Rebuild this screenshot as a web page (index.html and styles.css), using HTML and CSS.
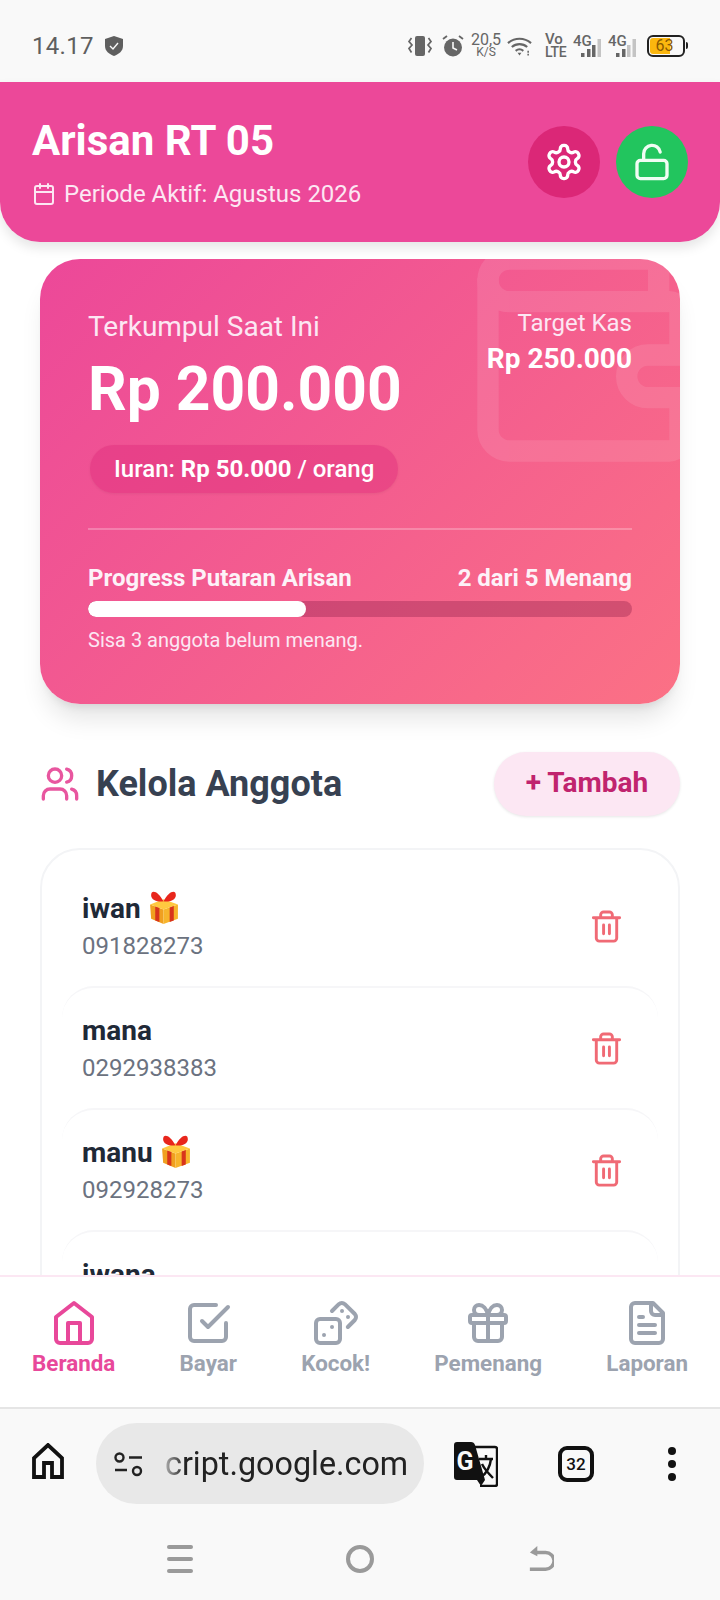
FILE: index.html
```html
<!DOCTYPE html>
<html lang="en">
<head>
    <meta charset="UTF-8">
    <meta name="viewport" content="width=device-width, initial-scale=1.0">
    <title>Arisan RT 05</title>
    <link rel="stylesheet" href="styles.css">
</head>
<body>
    <div class="phone">
        <!-- Android status bar -->
        <div class="status-bar">
            <div class="status-left">
                <span class="status-time">14.17</span>
                <svg class="shield" viewBox="0 0 18 20"><path d="M9 0l9 3v7c0 5-4 8-9 10-5-2-9-5-9-10V3z" fill="#5f5f5f"/><path d="M5 10l3 3 5-6" fill="none" stroke="#f9f9f9" stroke-width="1.4"/></svg>
            </div>
            <div class="status-right">
                <svg class="st-vibrate" viewBox="0 0 24 20"><rect x="7" y="0" width="10" height="20" rx="2" fill="#666"/><path d="M3.500 2L1 5.500l3 3.500-3 3.500 2.500 4M20.500 2L23 5.500 20 9l3 3.500-2.500 4" fill="none" stroke="#666" stroke-width="1.700"/></svg>
                <svg class="st-alarm" viewBox="0 0 22 22"><circle cx="11" cy="12.500" r="9" fill="#666"/><path d="M11 7v6l4 2" fill="none" stroke="#f9f9f9" stroke-width="1.600"/><path d="M1 4l4-3M21 4l-4-3" stroke="#666" stroke-width="1.800"/></svg>
                <div class="st-speed"><span class="st-speed-num">20,5</span><span class="st-speed-unit">K/S</span></div>
                <svg class="st-wifi" viewBox="0 0 26 20"><path d="M1 7c7-6 17-6 24 0M5 11c4.500-4 11.500-4 16 0M9 15c2.500-2 5.500-2 8 0" fill="none" stroke="#666" stroke-width="2.200"/><path d="M11 17h4l-2 3z" fill="#666"/><path d="M22 15v5" stroke="#666" stroke-width="1.600" stroke-dasharray="2 1"/></svg>
                <div class="st-volte"><span>Vo</span><span>LTE</span></div>
                <div class="st-signal">
                    <span class="st-4g">4G</span>
                    <svg class="st-bars" viewBox="0 0 22 18"><rect x="2" y="14" width="3.500" height="4" fill="#666"/><rect x="8" y="10" width="3.500" height="8" fill="#666"/><rect x="13" y="6" width="3.500" height="12" fill="#666"/><rect x="18.500" y="0" width="3.500" height="18" fill="#c4c4c4"/></svg>
                </div>
                <div class="st-signal">
                    <span class="st-4g">4G</span>
                    <svg class="st-bars" viewBox="0 0 22 18"><rect x="2" y="14" width="3.500" height="4" fill="#666"/><rect x="8" y="10" width="3.500" height="8" fill="#666"/><rect x="13" y="6" width="3.500" height="12" fill="#c4c4c4"/><rect x="18.500" y="0" width="3.500" height="18" fill="#c4c4c4"/></svg>
                </div>
                <div class="battery">
                    <div class="battery-body"><div class="battery-fill" style="width: 63%"></div><span class="battery-num">63</span></div>
                    <div class="battery-tip"></div>
                </div>
            </div>
        </div>

        <div class="app">
            <header class="app-header">
                <div class="app-heading">
                    <h1 class="app-title">Arisan RT 05</h1>
                    <div class="app-period">
                        <svg class="icon icon-calendar" viewBox="0 0 24 24"><path d="M8 2v4M16 2v4M3 10h18"/><rect x="3" y="4" width="18" height="18" rx="2"/></svg>
                        <span>Periode Aktif: Agustus 2026</span>
                    </div>
                </div>
                <div class="header-actions">
                    <div class="round-btn round-btn-settings">
                        <svg class="icon" viewBox="0 0 24 24"><path d="M12.220 2h-.44a2 2 0 0 0-2 2v.18a2 2 0 0 1-1 1.730l-.43.25a2 2 0 0 1-2 0l-.15-.08a2 2 0 0 0-2.730.73l-.22.38a2 2 0 0 0 .73 2.730l.15.1a2 2 0 0 1 1 1.720v.51a2 2 0 0 1-1 1.740l-.15.09a2 2 0 0 0-.73 2.730l.22.38a2 2 0 0 0 2.730.73l.15-.08a2 2 0 0 1 2 0l.43.25a2 2 0 0 1 1 1.730V20a2 2 0 0 0 2 2h.44a2 2 0 0 0 2-2v-.18a2 2 0 0 1 1-1.730l.43-.25a2 2 0 0 1 2 0l.15.08a2 2 0 0 0 2.730-.73l.22-.39a2 2 0 0 0-.73-2.730l-.15-.08a2 2 0 0 1-1-1.740v-.5a2 2 0 0 1 1-1.740l.15-.09a2 2 0 0 0 .73-2.730l-.22-.38a2 2 0 0 0-2.730-.73l-.15.08a2 2 0 0 1-2 0l-.43-.25a2 2 0 0 1-1-1.730V4a2 2 0 0 0-2-2z"/><circle cx="12" cy="12" r="3"/></svg>
                    </div>
                    <div class="round-btn round-btn-lock">
                        <svg class="icon" viewBox="0 0 24 24"><rect x="3" y="11" width="18" height="11" rx="2"/><path d="M7 11V7a5 5 0 0 1 9.900-1"/></svg>
                    </div>
                </div>
            </header>

            <main class="content">
                <section class="summary-card">
                    <svg class="summary-wallet" viewBox="0 0 24 24"><path d="M19 7V4a1 1 0 0 0-1-1H5a2 2 0 0 0 0 4h15a1 1 0 0 1 1 1v4h-3a2 2 0 0 0 0 4h3a1 1 0 0 0 1-1v-2a1 1 0 0 0-1-1"/><path d="M3 5v14a2 2 0 0 0 2 2h15a1 1 0 0 0 1-1v-4"/></svg>
                    <div class="summary-top">
                        <div>
                            <div class="summary-label">Terkumpul Saat Ini</div>
                            <div class="summary-amount">Rp 200.000</div>
                            <div class="summary-pill">Iuran: <b>Rp 50.000</b> / orang</div>
                        </div>
                        <div class="summary-target">
                            <div class="target-label">Target Kas</div>
                            <div class="target-amount">Rp 250.000</div>
                        </div>
                    </div>
                    <div class="summary-progress">
                        <div class="progress-labels">
                            <span>Progress Putaran Arisan</span>
                            <span>2 dari 5 Menang</span>
                        </div>
                        <div class="progress-track"><div class="progress-fill" style="width: 40%"></div></div>
                        <div class="progress-note">Sisa 3 anggota belum menang.</div>
                    </div>
                </section>

                <div class="section-head">
                    <div class="section-title">
                        <svg class="icon icon-users" viewBox="0 0 24 24"><path d="M16 21v-2a4 4 0 0 0-4-4H6a4 4 0 0 0-4 4v2"/><circle cx="9" cy="7" r="4"/><path d="M22 21v-2a4 4 0 0 0-3-3.870M16 3.130a4 4 0 0 1 0 7.750"/></svg>
                        <h2>Kelola Anggota</h2>
                    </div>
                    <div class="add-btn">+ Tambah</div>
                </div>

                <div class="member-list">
                    <div class="member">
                        <div>
                            <div class="member-name">iwan
                                <svg class="gift" viewBox="0 0 29 33"><path d="M1 14l13 5v14L2 28z" fill="#f0a020"/><path d="M14 19l14-5v14l-14 5z" fill="#f7b52c"/><path d="M1 14l13-5 14 5-14 5z" fill="#ffc940"/><path d="M6 16l4 1.500V31l-4-1.500zM20 17l4-1.500V29.500L20 31z" fill="#d8341c"/><path d="M14 11C9 1 2-1 2 5c0 5 7 7 12 6zM14 11c5-10 12-12 12-6 0 5-7 7-12 6z" fill="#e8261c"/></svg>
                            </div>
                            <div class="member-phone">091828273</div>
                        </div>
                        <svg class="icon icon-trash" viewBox="0 0 24 24"><path d="M3 6h18M19 6v14c0 1-1 2-2 2H7c-1 0-2-1-2-2V6M8 6V4c0-1 1-2 2-2h4c1 0 2 1 2 2v2M10 11v6M14 11v6"/></svg>
                    </div>
                    <div class="member">
                        <div>
                            <div class="member-name">mana</div>
                            <div class="member-phone">0292938383</div>
                        </div>
                        <svg class="icon icon-trash" viewBox="0 0 24 24"><path d="M3 6h18M19 6v14c0 1-1 2-2 2H7c-1 0-2-1-2-2V6M8 6V4c0-1 1-2 2-2h4c1 0 2 1 2 2v2M10 11v6M14 11v6"/></svg>
                    </div>
                    <div class="member">
                        <div>
                            <div class="member-name">manu
                                <svg class="gift" viewBox="0 0 29 33"><path d="M1 14l13 5v14L2 28z" fill="#f0a020"/><path d="M14 19l14-5v14l-14 5z" fill="#f7b52c"/><path d="M1 14l13-5 14 5-14 5z" fill="#ffc940"/><path d="M6 16l4 1.500V31l-4-1.500zM20 17l4-1.500V29.500L20 31z" fill="#d8341c"/><path d="M14 11C9 1 2-1 2 5c0 5 7 7 12 6zM14 11c5-10 12-12 12-6 0 5-7 7-12 6z" fill="#e8261c"/></svg>
                            </div>
                            <div class="member-phone">092928273</div>
                        </div>
                        <svg class="icon icon-trash" viewBox="0 0 24 24"><path d="M3 6h18M19 6v14c0 1-1 2-2 2H7c-1 0-2-1-2-2V6M8 6V4c0-1 1-2 2-2h4c1 0 2 1 2 2v2M10 11v6M14 11v6"/></svg>
                    </div>
                    <div class="member">
                        <div>
                            <div class="member-name">iwana</div>
                        </div>
                    </div>
                </div>
            </main>

            <nav class="bottom-nav">
                <div class="nav-item nav-item-active">
                    <svg class="icon" viewBox="0 0 24 24"><path d="M3 9l9-7 9 7v11a2 2 0 0 1-2 2H5a2 2 0 0 1-2-2z"/><path d="M9 22V12h6v10"/></svg>
                    <span>Beranda</span>
                </div>
                <div class="nav-item">
                    <svg class="icon" viewBox="0 0 24 24"><path d="M9 11l3 3L22 4"/><path d="M21 12v7a2 2 0 0 1-2 2H5a2 2 0 0 1-2-2V5a2 2 0 0 1 2-2h11"/></svg>
                    <span>Bayar</span>
                </div>
                <div class="nav-item">
                    <svg class="icon" viewBox="0 0 24 24"><rect x="2" y="10" width="12" height="12" rx="2"/><path d="M17.920 14l3.500-3.500a2.240 2.240 0 0 0 0-3l-5-4.920a2.240 2.240 0 0 0-3 0L10 6M6 18h.01M10 14h.01M15 6h.01M18 9h.01"/></svg>
                    <span>Kocok!</span>
                </div>
                <div class="nav-item">
                    <svg class="icon" viewBox="0 0 24 24"><rect x="3" y="8" width="18" height="4" rx="1"/><path d="M12 8v13M19 12v7a2 2 0 0 1-2 2H7a2 2 0 0 1-2-2v-7M7.500 8a2.500 2.500 0 0 1 0-5A4.800 8 0 0 1 12 8a4.800 8 0 0 1 4.500-5 2.500 2.500 0 0 1 0 5"/></svg>
                    <span>Pemenang</span>
                </div>
                <div class="nav-item">
                    <svg class="icon" viewBox="0 0 24 24"><path d="M15 2H6a2 2 0 0 0-2 2v16a2 2 0 0 0 2 2h12a2 2 0 0 0 2-2V7z"/><path d="M14 2v4a2 2 0 0 0 2 2h4M10 9H8M16 13H8M16 17H8"/></svg>
                    <span>Laporan</span>
                </div>
            </nav>
        </div>

        <!-- Chrome toolbar -->
        <div class="browser-bar">
            <svg class="br-home" viewBox="0 0 32 36"><path d="M2 34V15L16 2l14 13v19H20V20h-8v14z" fill="none" stroke="#111" stroke-width="3.800"/></svg>
            <div class="url-pill">
                <svg class="br-tune" viewBox="0 0 29 25"><circle cx="5.500" cy="5.500" r="4" fill="none" stroke="#222" stroke-width="2.400"/><path d="M15 5.500h13M1 18h12" stroke="#222" stroke-width="2.400"/><circle cx="23" cy="19" r="4" fill="none" stroke="#222" stroke-width="2.400"/></svg>
                <span class="url-text">cript.google.com</span>
            </div>
            <svg class="br-translate" viewBox="0 0 44 45"><path d="M21 5h20a2 2 0 0 1 2 2v35a2 2 0 0 1-2 2H26" fill="#f9f9f9" stroke="#111" stroke-width="2.400"/><path d="M3 0h14q3 0 4 3l10 35H3q-3 0-3-3V3q0-3 3-3zM23 38h8l-4 6z" fill="#111"/><path d="M25 17h14M32 13v4M27 35c6-4 9-10 10-18M28 22c3 6 7 10 11 14" fill="none" stroke="#111" stroke-width="2.400"/><text x="11" y="28" class="br-g">G</text></svg>
            <div class="tab-count">32</div>
            <div class="br-menu"><i></i><i></i><i></i></div>
        </div>

        <div class="gesture-bar">
            <div class="ge-menu"><i></i><i></i><i></i></div>
            <div class="ge-home"></div>
            <svg class="ge-back" viewBox="0 0 28 30"><path d="M8 8h11a7.500 7.500 0 0 1 0 18H2" fill="none" stroke="#9a9a9a" stroke-width="3.600"/><path d="M10 1L2 8l8 4z" fill="#9a9a9a"/></svg>
        </div>
    </div>
</body>
</html>
```

FILE: styles.css
```css
* {
    box-sizing: border-box;
}
body {
    margin: 0;
    font-family: Roboto, "Liberation Sans", sans-serif;
    background-color: #f9fafb;
}
.phone {
    width: 720px;
    height: 1600px;
    display: flex;
    flex-direction: column;
    overflow: hidden;
}
.icon {
    fill: none;
    stroke: currentColor;
    stroke-width: 2;
    stroke-linecap: round;
    stroke-linejoin: round;
}

/* Status bar */
.status-bar {
    height: 82px;
    flex: none;
    padding: 9px 32px 0;
    display: flex;
    align-items: center;
    justify-content: space-between;
    background: #f9f9f9;
    color: #666;
}
.status-left {
    display: flex;
    align-items: center;
    gap: 11px;
}
.status-time {
    font-size: 24px;
    letter-spacing: 0.3px;
    color: #5f5f5f;
}
.shield {
    width: 18px;
    height: 20px;
}
.status-right {
    display: flex;
    align-items: center;
}
.st-vibrate {
    width: 24px;
    height: 20px;
}
.st-alarm {
    width: 22px;
    height: 22px;
    margin-left: 10px;
}
.st-speed {
    margin-left: 8px;
    width: 28px;
    display: flex;
    flex-direction: column;
    align-items: center;
}
.st-speed-num {
    font-size: 16px;
    line-height: 14px;
}
.st-speed-unit {
    font-size: 12px;
    line-height: 11px;
}
.st-wifi {
    width: 25px;
    height: 20px;
    margin-left: 7px;
}
.st-volte {
    margin-left: 13px;
    width: 21px;
    display: flex;
    flex-direction: column;
    font-size: 15px;
    line-height: 13px;
    font-weight: 500;
}
.st-volte span:last-child {
    font-size: 14px;
    letter-spacing: -0.3px;
}
.st-signal {
    position: relative;
    width: 28px;
    height: 22px;
    margin-left: 7px;
}
.st-4g {
    font-size: 15px;
    line-height: 15px;
    font-weight: 500;
    position: absolute;
    left: 0;
    top: -1px;
}
.st-bars {
    position: absolute;
    right: 0;
    bottom: 0;
    width: 22px;
    height: 18px;
}
.battery {
    margin-left: 11px;
    display: flex;
    align-items: center;
    gap: 1px;
}
.battery-body {
    position: relative;
    width: 38px;
    height: 22px;
    border: 2px solid #222;
    border-radius: 6px;
    padding: 1px;
    background: #f9f9f9;
}
.battery-fill {
    height: 100%;
    background: #fbb70e;
    border-radius: 3px 0 0 3px;
}
.battery-num {
    position: absolute;
    inset: 0;
    padding-right: 3px;
    text-align: center;
    font-size: 16px;
    line-height: 18px;
    color: #8a5a00;
}
.battery-tip {
    width: 2px;
    height: 7px;
    background: #222;
    border-radius: 0 2px 2px 0;
}

/* App */
.app {
    flex: 1;
    display: flex;
    flex-direction: column;
    min-height: 0;
    background: #fff;
}
.app-header {
    flex: none;
    height: 160px;
    padding: 0 32px;
    display: flex;
    align-items: center;
    justify-content: space-between;
    background: #ec4899;
    border-radius: 0 0 40px 40px;
    box-shadow: 0 6px 12px rgba(0,0,0,0.1);
    color: #fff;
    position: relative;
    z-index: 2;
}
.app-heading {
    padding-top: 4px;
}
.app-title {
    margin: 0 0 14px;
    font-size: 42px;
    line-height: 46px;
    font-weight: 700;
}
.app-period {
    display: flex;
    align-items: center;
    gap: 8px;
    font-size: 24px;
    line-height: 32px;
    color: #fce7f3;
}
.icon-calendar {
    width: 24px;
    height: 24px;
}
.header-actions {
    display: flex;
    gap: 16px;
}
.round-btn {
    width: 72px;
    height: 72px;
    border-radius: 50%;
    display: flex;
    align-items: center;
    justify-content: center;
}
.round-btn .icon {
    width: 40px;
    height: 40px;
}
.round-btn-settings {
    background: #db2777;
}
.round-btn-lock {
    background: #22c55e;
}
.round-btn-lock .icon {
    stroke: #f0fdf4;
}

.content {
    flex: 1;
    min-height: 0;
    overflow: hidden;
    padding: 17px 40px 0;
}
.summary-card {
    position: relative;
    overflow: hidden;
    height: 445px;
    padding: 50px 48px 0;
    border-radius: 40px;
    background: linear-gradient(135deg, #ec4899, #fb7185);
    color: #fff;
    box-shadow: 0 20px 25px -5px rgba(0,0,0,0.1), 0 8px 10px -6px rgba(0,0,0,0.1);
    display: flex;
    flex-direction: column;
}
.summary-wallet {
    position: absolute;
    top: -32px;
    right: -32px;
    width: 256px;
    height: 256px;
    fill: none;
    stroke: #fff;
    stroke-width: 2;
    stroke-linecap: round;
    stroke-linejoin: round;
    opacity: 0.1;
}
.summary-top {
    position: relative;
    height: 221px;
    display: flex;
    justify-content: space-between;
    align-items: flex-start;
    border-bottom: 2px solid rgba(255,255,255,0.25);
}
.summary-label {
    font-size: 28px;
    line-height: 36px;
    color: #fce7f3;
}
.summary-amount {
    margin-top: 9px;
    font-size: 60.500px;
    line-height: 72px;
    font-weight: 700;
}
.summary-pill {
    display: inline-block;
    margin-top: 19px;
    margin-left: 2px;
    padding: 0 24px;
    height: 48px;
    line-height: 48px;
    border-radius: 24px;
    background: rgba(219,39,119,0.4);
    font-size: 24px;
    font-weight: 500;
    box-shadow: 0 1px 3px rgba(0,0,0,0.06);
}
.summary-pill b {
    font-weight: 700;
}
.summary-target {
    margin-top: -2px;
    text-align: right;
}
.target-label {
    font-size: 24px;
    line-height: 32px;
    color: #fce7f3;
}
.target-amount {
    margin-top: 2px;
    font-size: 28px;
    line-height: 36px;
    font-weight: 700;
}
.summary-progress {
    position: relative;
    padding-top: 32px;
}
.progress-labels {
    display: flex;
    justify-content: space-between;
    font-size: 24px;
    line-height: 32px;
    font-weight: 700;
    color: #fdf2f8;
}
.progress-track {
    margin-top: 7px;
    height: 16px;
    border-radius: 8px;
    background: rgba(131,24,67,0.33);
    overflow: hidden;
}
.progress-fill {
    height: 100%;
    background: #fff;
    border-radius: 8px;
}
.progress-note {
    margin-top: 9px;
    font-size: 20px;
    line-height: 28px;
    color: #fce7f3;
}

.section-head {
    margin-top: 48px;
    height: 64px;
    display: flex;
    align-items: center;
    justify-content: space-between;
}
.section-title {
    display: flex;
    align-items: center;
    gap: 16px;
}
.section-title h2 {
    margin: 0;
    font-size: 36px;
    font-weight: 700;
    color: #374151;
}
.icon-users {
    width: 40px;
    height: 40px;
    color: #e8569f;
}
.add-btn {
    width: 186px;
    height: 64px;
    line-height: 62px;
    text-align: center;
    border-radius: 32px;
    background: #fce7f3;
    color: #c0246e;
    font-size: 28px;
    font-weight: 700;
    box-shadow: 0 1px 3px rgba(0,0,0,0.1);
}
.member-list {
    margin-top: 32px;
    border: 2px solid #f3f4f6;
    border-radius: 40px;
    padding: 14px 20px 0;
    background: #fff;
}
.member {
    height: 122px;
    padding: 0 20px;
    display: flex;
    align-items: center;
    justify-content: space-between;
    border-top: 2px solid transparent;
    border-radius: 32px;
}
.member + .member {
    border-top-color: #f6f6f8;
}
.member-name {
    display: flex;
    align-items: center;
    gap: 8px;
    height: 36px;
    font-size: 28px;
    font-weight: 700;
    color: #1f2937;
}
.member-phone {
    margin-top: 4px;
    font-size: 24px;
    line-height: 32px;
    color: #6b7280;
}
.member:last-child > div {
    align-self: flex-start;
    padding-top: 24px;
}
.gift {
    width: 30px;
    height: 34px;
    margin-top: -3px;
}
.icon-trash {
    width: 35px;
    height: 35px;
    margin-right: 14px;
    color: #f06a75;
}

/* Bottom nav */
.bottom-nav {
    flex: none;
    height: 132px;
    padding: 22px 32px 0;
    display: flex;
    justify-content: space-between;
    align-items: flex-start;
    background: #fff;
    border-top: 2px solid #fce7f3;
    position: relative;
}
.nav-item {
    display: flex;
    flex-direction: column;
    align-items: center;
    color: #9ca3af;
    font-size: 22.400px;
    font-weight: 700;
    line-height: 28px;
}
.nav-item .icon {
    width: 48px;
    height: 48px;
    margin-bottom: 2px;
}
.nav-item-active {
    color: #e8489a;
}

/* Browser */
.browser-bar {
    flex: none;
    height: 115px;
    padding: 14px 32px 0;
    display: flex;
    align-items: flex-start;
    background: #f9f9f9;
    border-top: 2px solid #e5e5e5;
}
.br-home {
    width: 32px;
    height: 36px;
    margin-top: 20px;
}
.url-pill {
    margin-left: 32px;
    width: 328px;
    height: 81px;
    flex: none;
    border-radius: 41px;
    background: #e8e8e8;
    display: flex;
    align-items: center;
    padding-left: 18px;
}
.br-tune {
    width: 29px;
    height: 25px;
    margin-top: 1px;
}
.url-text {
    margin-left: 22px;
    font-size: 32.300px;
    color: #222;
    -webkit-mask-image: linear-gradient(90deg, rgba(0,0,0,0.3), #000 20px);
    mask-image: linear-gradient(90deg, rgba(0,0,0,0.3), #000 20px);
}
.br-translate {
    width: 44px;
    height: 45px;
    margin: 19px 0 0 30px;
}
.br-g {
    font-size: 25px;
    font-weight: 700;
    fill: #f9f9f9;
    text-anchor: middle;
    font-family: Roboto, sans-serif;
}
.tab-count {
    width: 36px;
    height: 36px;
    margin: 23px 0 0 60px;
    border: 4px solid #111;
    border-radius: 9px;
    text-align: center;
    font-size: 17px;
    line-height: 28px;
    font-weight: 500;
    color: #111;
}
.br-menu {
    margin: 24px 0 0 74px;
    display: flex;
    flex-direction: column;
    gap: 5px;
}
.br-menu i {
    width: 8px;
    height: 8px;
    border-radius: 50%;
    background: #111;
}
.gesture-bar {
    flex: none;
    height: 78px;
    background: #f9f9f9;
    display: flex;
    align-items: flex-start;
    padding: 23px 166px 0 167px;
    justify-content: space-between;
}
.ge-menu {
    width: 26px;
    display: flex;
    flex-direction: column;
    gap: 8px;
}
.ge-menu i {
    height: 4px;
    background: #9a9a9a;
    border-radius: 2px;
}
.ge-home {
    width: 28px;
    height: 28px;
    margin-left: -2px;
    border: 4px solid #9a9a9a;
    border-radius: 50%;
}
.ge-back {
    width: 26px;
    height: 28px;
}
```
